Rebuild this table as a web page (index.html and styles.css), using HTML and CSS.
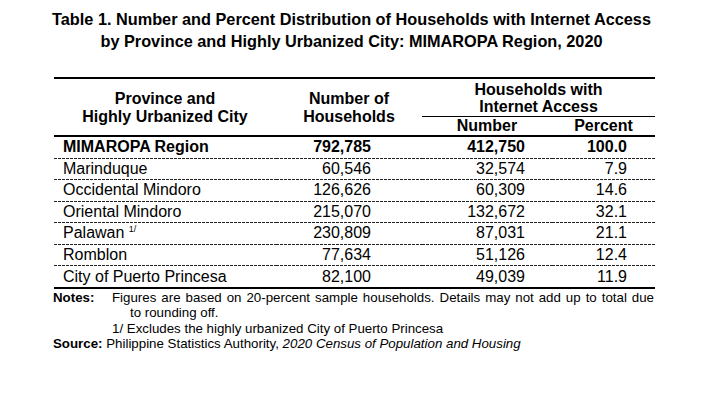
FILE: index.html
```html
<!DOCTYPE html>
<html>
<head>
<meta charset="utf-8">
<link rel="stylesheet" href="styles.css">
</head>
<body>
<div class="page">
  <h1 class="title">Table 1. Number and Percent Distribution of Households with Internet Access<br>by Province and Highly Urbanized City: MIMAROPA Region, 2020</h1>
  <table class="data">
    <colgroup>
      <col class="c1"><col class="c2"><col class="c3"><col class="c4">
    </colgroup>
    <thead>
      <tr class="h1">
        <th rowspan="2" class="hp">Province and<br>Highly Urbanized City</th>
        <th rowspan="2" class="hp">Number of<br>Households</th>
        <th colspan="2" class="hgroup">Households with<br>Internet Access</th>
      </tr>
      <tr class="h2">
        <th class="hsub">Number</th>
        <th class="hsub">Percent</th>
      </tr>
    </thead>
    <tbody>
      <tr class="total">
        <td class="name">MIMAROPA Region</td><td class="n2">792,785</td><td class="n3">412,750</td><td class="n4">100.0</td>
      </tr>
      <tr><td class="name">Marinduque</td><td class="n2">60,546</td><td class="n3">32,574</td><td class="n4">7.9</td></tr>
      <tr><td class="name">Occidental Mindoro</td><td class="n2">126,626</td><td class="n3">60,309</td><td class="n4">14.6</td></tr>
      <tr><td class="name">Oriental Mindoro</td><td class="n2">215,070</td><td class="n3">132,672</td><td class="n4">32.1</td></tr>
      <tr><td class="name">Palawan <sup>1/</sup></td><td class="n2">230,809</td><td class="n3">87,031</td><td class="n4">21.1</td></tr>
      <tr><td class="name">Romblon</td><td class="n2">77,634</td><td class="n3">51,126</td><td class="n4">12.4</td></tr>
      <tr class="last"><td class="name">City of Puerto Princesa</td><td class="n2">82,100</td><td class="n3">49,039</td><td class="n4">11.9</td></tr>
    </tbody>
  </table>
  <div class="notes">
    <div class="note-row">
      <span class="label">Notes:</span>
      <div class="note-body">
        <p class="note-text justified">Figures are based on 20-percent sample households. Details may not add up to total due</p>
        <p class="note-text indent">to rounding off.</p>
        <p class="note-text">1/ Excludes the highly urbanized City of Puerto Princesa</p>
      </div>
    </div>
    <p class="source"><span class="label">Source:</span> Philippine Statistics Authority, <em>2020 Census of Population and Housing</em></p>
  </div>
</div>
</body>
</html>
```

FILE: styles.css
```css
* { box-sizing: border-box; }
html, body { margin: 0; padding: 0; background: #fff; }
body { font-family: "Liberation Sans", Arial, sans-serif; color: #000; }
.page { width: 703px; height: 405px; padding-top: 8px; }
.title {
  margin: 0;
  font-weight: bold;
  font-size: 16.3px;
  line-height: 22px;
  text-align: center;
}
.data {
  margin: 25px 0 0 54px;
  width: 601px;
  border-collapse: separate;
  border-spacing: 0;
  font-size: 16px;
  table-layout: fixed;
}
.c1 { width: 222px; }
.c2 { width: 146px; }
.c3 { width: 130px; }
.c4 { width: 103px; }
.data th { font-weight: bold; padding: 0; text-align: center; }
.data tr.h1 th { border-top: 2px solid #000; }
.hp { vertical-align: middle; line-height: 18px; border-bottom: 2px solid #000; padding-top: 1px !important; }
.hgroup { line-height: 17px; padding-top: 2px !important; padding-bottom: 1px !important; border-bottom: 1px solid #000; }
.hsub { line-height: 18px; border-bottom: 2px solid #000; }
.data td {
  padding: 0 0 1px 0;
  line-height: 20.5px;
  vertical-align: middle;
  background-image: repeating-linear-gradient(90deg, #222 0 3px, transparent 3px 4px);
  background-size: 100% 1px;
  background-position: left bottom;
  background-repeat: no-repeat;
}
.data tr.total td { font-weight: bold; }
.data tr.last td { background: none; padding-bottom: 0; border-bottom: 2px solid #000; line-height: 21px; }
.data td.name { padding-left: 9px; text-align: left; }
.data td.n2 { text-align: right; padding-right: 51px; }
.data td.n3 { text-align: right; padding-right: 27px; }
.data td.n4 { text-align: right; padding-right: 28px; }
sup { font-size: 9px; line-height: 0; vertical-align: 6px; }
.notes {
  margin: 0 0 0 53px;
  width: 603px;
  font-size: 13.3px;
  line-height: 15.3px;
  padding-top: 1px;
}
.note-row { display: flex; }
.label { font-weight: bold; }
.note-row .label { width: 59px; flex: none; }
.note-body { flex: 1; }
.note-text { margin: 0; white-space: nowrap; }
.justified { width: 542px; text-align: justify; text-align-last: justify; }
.indent { padding-left: 18px; }
.source { margin: 0; }
```
